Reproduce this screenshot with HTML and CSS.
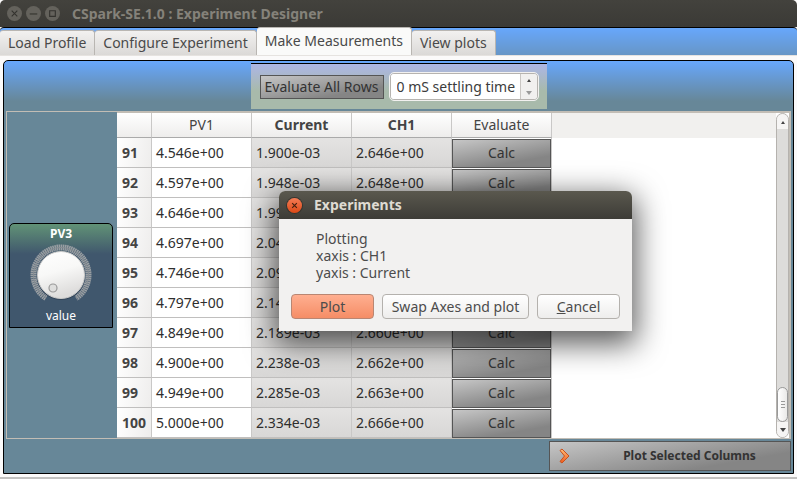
FILE: index.html
```html
<!DOCTYPE html>
<html lang="en">
<head>
<meta charset="utf-8">
<title>CSpark-SE.1.0 : Experiment Designer</title>
<link rel="stylesheet" href="styles.css">
</head>
<body>
<header class="titlebar">
  <div class="window-buttons">
    <button class="wbtn" aria-label="Close window"><svg viewBox="0 0 16 16"><path d="M5 5l6 6M11 5l-6 6"/></svg></button>
    <button class="wbtn" aria-label="Minimize"><svg viewBox="0 0 16 16"><path d="M4 8.500h8"/></svg></button>
    <button class="wbtn" aria-label="Maximize"><svg viewBox="0 0 16 16"><path d="M5 5h6v6h-6z"/></svg></button>
  </div>
  <h1>CSpark-SE.1.0 : Experiment Designer</h1>
</header>
<nav class="tabs" role="tablist">
  <button class="tab" role="tab">Load Profile</button>
  <button class="tab" role="tab">Configure Experiment</button>
  <button class="tab selected" role="tab" aria-selected="true">Make Measurements</button>
  <button class="tab" role="tab">View plots</button>
</nav>
<main class="page">
  <div class="panel">
    <div class="toolbar">
      <div class="tools">
        <button class="metal eval-all">Evaluate All Rows</button>
        <div class="spin">
          <input type="text" value="0 mS settling time" aria-label="Settling time">
          <div class="steps">
            <button aria-label="Increase"><svg viewBox="0 0 6 4"><path d="M1 4l2-3 2 3z" fill="#444"/></svg></button>
            <button aria-label="Decrease"><svg viewBox="0 0 6 4"><path d="M0 0h6L3 4z" fill="#999"/></svg></button>
          </div>
        </div>
      </div>
    </div>
    <div class="work">
      <aside class="side">
        <div class="knob-card">
          <strong>PV3</strong>
          <svg class="knob" viewBox="0 0 62 62" role="img" aria-label="PV3 dial">
            <defs>
              <linearGradient id="face" x1="0" y1="0" x2="0.3" y2="1"><stop offset="0" stop-color="#fff"/><stop offset="0.5" stop-color="#f8f8f7"/><stop offset="1" stop-color="#dddcdb"/></linearGradient>
            </defs>
            <path d="M16 54A27.500 27.500 0 1 1 46 54" fill="none" stroke="#9a9fa3" stroke-width="6" stroke-dasharray="1.500 .5"/>
            <path d="M16 54A27.500 27.500 0 1 1 46 54" fill="none" stroke="#888e93" stroke-width="1"/>
            <circle cx="31" cy="32" r="24" fill="#34465a"/>
            <circle cx="31" cy="31" r="23.500" fill="url(#face)" stroke="#c9c9c8"/>
            <circle cx="23" cy="44" r="4" fill="#dededd" stroke="#999" stroke-width="1.200"/>
          </svg>
          <span>value</span>
        </div>
      </aside>
      <div class="sheet">
        <div class="table-area">
        <table>
          <colgroup><col class="c-num"><col><col><col><col></colgroup>
          <thead><tr><th></th><th class="light" scope="col">PV1</th><th scope="col">Current</th><th scope="col">CH1</th><th class="light" scope="col">Evaluate</th></tr></thead>
          <tbody>
            <tr><th scope="row">91</th><td>4.546e+00</td><td class="sel">1.900e-03</td><td class="sel">2.646e+00</td><td class="act"><button class="metal">Calc</button></td></tr>
            <tr><th scope="row">92</th><td>4.597e+00</td><td class="sel">1.948e-03</td><td class="sel">2.648e+00</td><td class="act"><button class="metal">Calc</button></td></tr>
            <tr><th scope="row">93</th><td>4.646e+00</td><td class="sel">1.99</td><td class="sel"></td><td class="act"><button class="metal" aria-label="Calc"></button></td></tr>
            <tr><th scope="row">94</th><td>4.697e+00</td><td class="sel">2.04</td><td class="sel"></td><td class="act"><button class="metal" aria-label="Calc"></button></td></tr>
            <tr><th scope="row">95</th><td>4.746e+00</td><td class="sel">2.09</td><td class="sel"></td><td class="act"><button class="metal" aria-label="Calc"></button></td></tr>
            <tr><th scope="row">96</th><td>4.797e+00</td><td class="sel">2.14</td><td class="sel"></td><td class="act"><button class="metal" aria-label="Calc"></button></td></tr>
            <tr><th scope="row">97</th><td>4.849e+00</td><td class="sel">2.189e-03</td><td class="sel">2.660e+00</td><td class="act"><button class="metal">Calc</button></td></tr>
            <tr><th scope="row">98</th><td>4.900e+00</td><td class="sel">2.238e-03</td><td class="sel">2.662e+00</td><td class="act"><button class="metal">Calc</button></td></tr>
            <tr><th scope="row">99</th><td>4.949e+00</td><td class="sel">2.285e-03</td><td class="sel">2.663e+00</td><td class="act"><button class="metal">Calc</button></td></tr>
            <tr><th scope="row">100</th><td>5.000e+00</td><td class="sel">2.334e-03</td><td class="sel">2.666e+00</td><td class="act"><button class="metal">Calc</button></td></tr>
          </tbody>
        </table>
        <div class="rest"></div>
        </div>
        <div class="scrollbar">
          <button class="up" aria-label="Scroll up"><svg viewBox="0 0 6 4"><path d="M1 4l2-3 2 3z" fill="#444"/></svg></button>
          <div class="track"><div class="thumb"><i></i><i></i><i></i></div></div>
          <button class="down" aria-label="Scroll down"><svg viewBox="0 0 6 4"><path d="M0 0h6L3 4z" fill="#444"/></svg></button>
        </div>
      </div>
    </div>
    <div class="actions">
      <button class="metal plot-cols">
        <svg viewBox="0 0 12 16"><defs><linearGradient id="arrow" x1="0" y1="0" x2="0" y2="1"><stop offset="0" stop-color="#ffc07a"/><stop offset="1" stop-color="#ee5a1c"/></linearGradient></defs><path d="M1 2.500L3 1l7 7-7 7-2-1.500L5.500 8z" fill="url(#arrow)" stroke="#c8501c"/></svg>
        <span>Plot Selected Columns</span>
      </button>
    </div>
  </div>
</main>
<section class="dialog" role="dialog" aria-labelledby="dlg-title">
  <header>
    <button class="close" aria-label="Close"><svg viewBox="0 0 16 16"><path d="M5.500 5.500l5 5M10.500 5.500l-5 5"/></svg></button>
    <h2 id="dlg-title">Experiments</h2>
  </header>
  <p>Plotting<br>xaxis : CH1<br>yaxis : Current</p>
  <div class="choices">
    <button class="primary">Plot</button>
    <button class="wide">Swap Axes and plot</button>
    <button><u>C</u>ancel</button>
  </div>
</section>
</body>
</html>
```

FILE: styles.css
```css
* { box-sizing: border-box; }
body {
  margin: 0;
  min-height: 100vh;
  display: flex;
  flex-direction: column;
  background: #fbfafa;
  border-bottom: 2px solid #c2c1c0;
  font: 14px/20px "Noto Sans", sans-serif;
  color: #3c3c3c;
}
button, input { font: inherit; color: inherit; margin: 0; padding: 0; }
svg { display: block; }

.titlebar {
  display: flex;
  align-items: center;
  gap: 12px;
  height: 27px;
  padding-left: 7px;
  background: linear-gradient(#43423d, #3b3a36);
  border-radius: 5px 5px 0 0;
}
.window-buttons { display: flex; gap: 4px; }
.wbtn {
  width: 15px;
  height: 15px;
  border: 0;
  border-radius: 50%;
  background: #64625c;
}
.wbtn svg { fill: none; stroke: #34332f; stroke-width: 1.2; }
.titlebar h1 { margin: 0; font-size: 14px; line-height: 20px; color: #85827a; }

.tabs {
  display: flex;
  align-items: flex-end;
  height: 29px;
  border-top: 1px solid #000;
  border-radius: 4px 4px 0 0;
  background: linear-gradient(#67a7fc, #6795c4);
}
.tab {
  height: 26px;
  padding: 0 8px 2px;
  border: 1px solid #b9b6b2;
  border-width: 1px 1px 0 0;
  border-radius: 3px 3px 0 0;
  background: linear-gradient(#f2f1f0, #dad8d6);
  white-space: nowrap;
  color: #4a4a4a;
}
.tab.selected { height: 29px; background: #fafaf9; margin-top: -1px; }

.page { flex: 1; display: flex; padding: 4px 3px 3px; border-top: 1px solid #e6e3e0; margin-top: -1px; }
.panel {
  flex: 1;
  display: flex;
  flex-direction: column;
  min-width: 0;
  border: 1px solid #000;
  border-radius: 5px 5px 0 0;
  background: linear-gradient(#67a7fc, #678798 40px);
}
.toolbar { display: flex; justify-content: center; padding: 2px 0; }
.tools {
  display: flex;
  align-items: center;
  gap: 6px;
  height: 46px;
  padding: 0 9px;
  border-top: 1px solid #000;
  background: linear-gradient(#acb6e6, #a8baab 27px);
}
.metal {
  border: 1px solid #555;
  border-radius: 0;
  background: linear-gradient(170deg, #c6c6c6, #858585 75%);
  color: #333;
}
.eval-all { width: 124px; height: 24px; white-space: nowrap; }
.spin {
  display: flex;
  width: 148px;
  height: 27px;
  border: 1px solid #b6b3af;
  border-radius: 4px;
  outline: 1px solid #f2f1f0;
  background: #fff;
  overflow: hidden;
}
.spin input { flex: 1; min-width: 0; border: 0; padding-left: 6px; background: #fff; }
.steps { display: flex; flex-direction: column; width: 17px; border-left: 1px solid #c9c6c3; }
.steps button { flex: 1; display: grid; place-items: center; border: 0; background: #f1f0ef; }
.steps svg { width: 6px; height: 4px; }

.work {
  flex: 1;
  display: flex;
  margin: 0 2px;
  border: 1px solid #c2bdb5;
}
.side { flex: 0 0 110px; display: flex; flex-direction: column; justify-content: center; padding: 0 4px 0 2px; }
.knob-card {
  display: flex;
  flex-direction: column;
  align-items: center;
  height: 105px;
  border: 1px solid #000;
  border-radius: 5px 5px 0 0;
  background: linear-gradient(#619276, #40576d 30px);
  color: #fff;
  font-size: 12px;
}
.knob { width: 62px; height: 62px; }

.sheet { flex: 1; display: flex; min-width: 0; border-top: 1px solid #c2bdb5; background: #fff; border-right: 1px solid #c2bdb5; }
.table-area { flex: 1; display: flex; min-width: 0; }
.rest { flex: 1; background: linear-gradient(#f1f0ee 25px, #fff 25px); }
table { width: 435px; table-layout: fixed; border-collapse: separate; border-spacing: 0; }
.c-num { width: 35px; }
th, td { padding: 0; border-right: 1px solid #c9c8c7; border-bottom: 1px solid #c0bfbe; }
thead th { height: 25px; border-bottom-color: #aaa; background: linear-gradient(#fff, #eeedec); color: #444; }
th.light { font-weight: 400; }
tbody th { height: 30px; padding-left: 5px; text-align: left; background: linear-gradient(100deg, #fff, #eeedec); color: #444; }
td { padding-left: 4px; color: #2e2e2e; }
td.sel { background: linear-gradient(#e4e3e2, #d8d7d6); }
td.act { padding: 0; border-bottom: 0; }
td.act .metal { display: block; width: 99px; height: 29px; }

.scrollbar { width: 13px; display: flex; flex-direction: column; border: 1px solid #b5b2ae; border-radius: 7px; background: #dddcda; overflow: hidden; }
.scrollbar button { display: grid; place-items: center; height: 15px; border: 0; background: #f6f5f4; }
.scrollbar svg { width: 6px; height: 4px; }
.track { flex: 1; display: flex; flex-direction: column; justify-content: flex-end; }
.thumb {
  display: flex;
  flex-direction: column;
  align-items: center;
  justify-content: center;
  gap: 2px;
  height: 35px;
  border: 1px solid #999;
  border-radius: 6px;
  background: linear-gradient(90deg, #fff, #eae9e8);
}
.thumb i { width: 4px; height: 1px; background: #999; }

.actions { display: flex; justify-content: flex-end; padding: 2px; }
.plot-cols { display: flex; align-items: center; width: 242px; height: 30px; padding-left: 9px; font-size: 12px; font-weight: 700; }
.plot-cols svg { width: 12px; height: 16px; }
.plot-cols span { flex: 1; padding-left: 18px; text-align: center; }

.dialog {
  position: absolute;
  left: 279px;
  top: 191px;
  width: 353px;
  padding-bottom: 12px;
  border-radius: 6px 6px 0 0;
  background: #f2f1f0;
  color: #4c4c4c;
  box-shadow: 0 9px 30px 4px rgba(0, 0, 0, 0.65);
}
.dialog header {
  display: flex;
  align-items: center;
  gap: 12px;
  height: 28px;
  padding-left: 8px;
  border-radius: 6px 6px 0 0;
  background: linear-gradient(#5a584e, #3d3c37);
}
.dialog h2 { margin: 0; font-size: 14px; line-height: 20px; color: #dfdbd2; }
.close { width: 15px; height: 15px; border: 0; border-radius: 50%; background: linear-gradient(#f47c55, #dd4916); box-shadow: 0 0 0 1px #37352f; }
.close svg { stroke: #43200f; stroke-width: 1.2; }
.dialog p { margin: 0; padding: 11px 0 13px 37px; line-height: 17px; }
.choices { display: flex; gap: 8px; padding: 0 12px; }
.choices button { flex: 1 1 83px; height: 25px; border: 1px solid #b4b1ad; border-radius: 4px; background: linear-gradient(#fff, #eeedec); white-space: nowrap; }
.choices .wide { flex: 1 1 147px; }
.choices .primary { border-color: #b98672; background: linear-gradient(#ffaf90, #f58d66); }
```
